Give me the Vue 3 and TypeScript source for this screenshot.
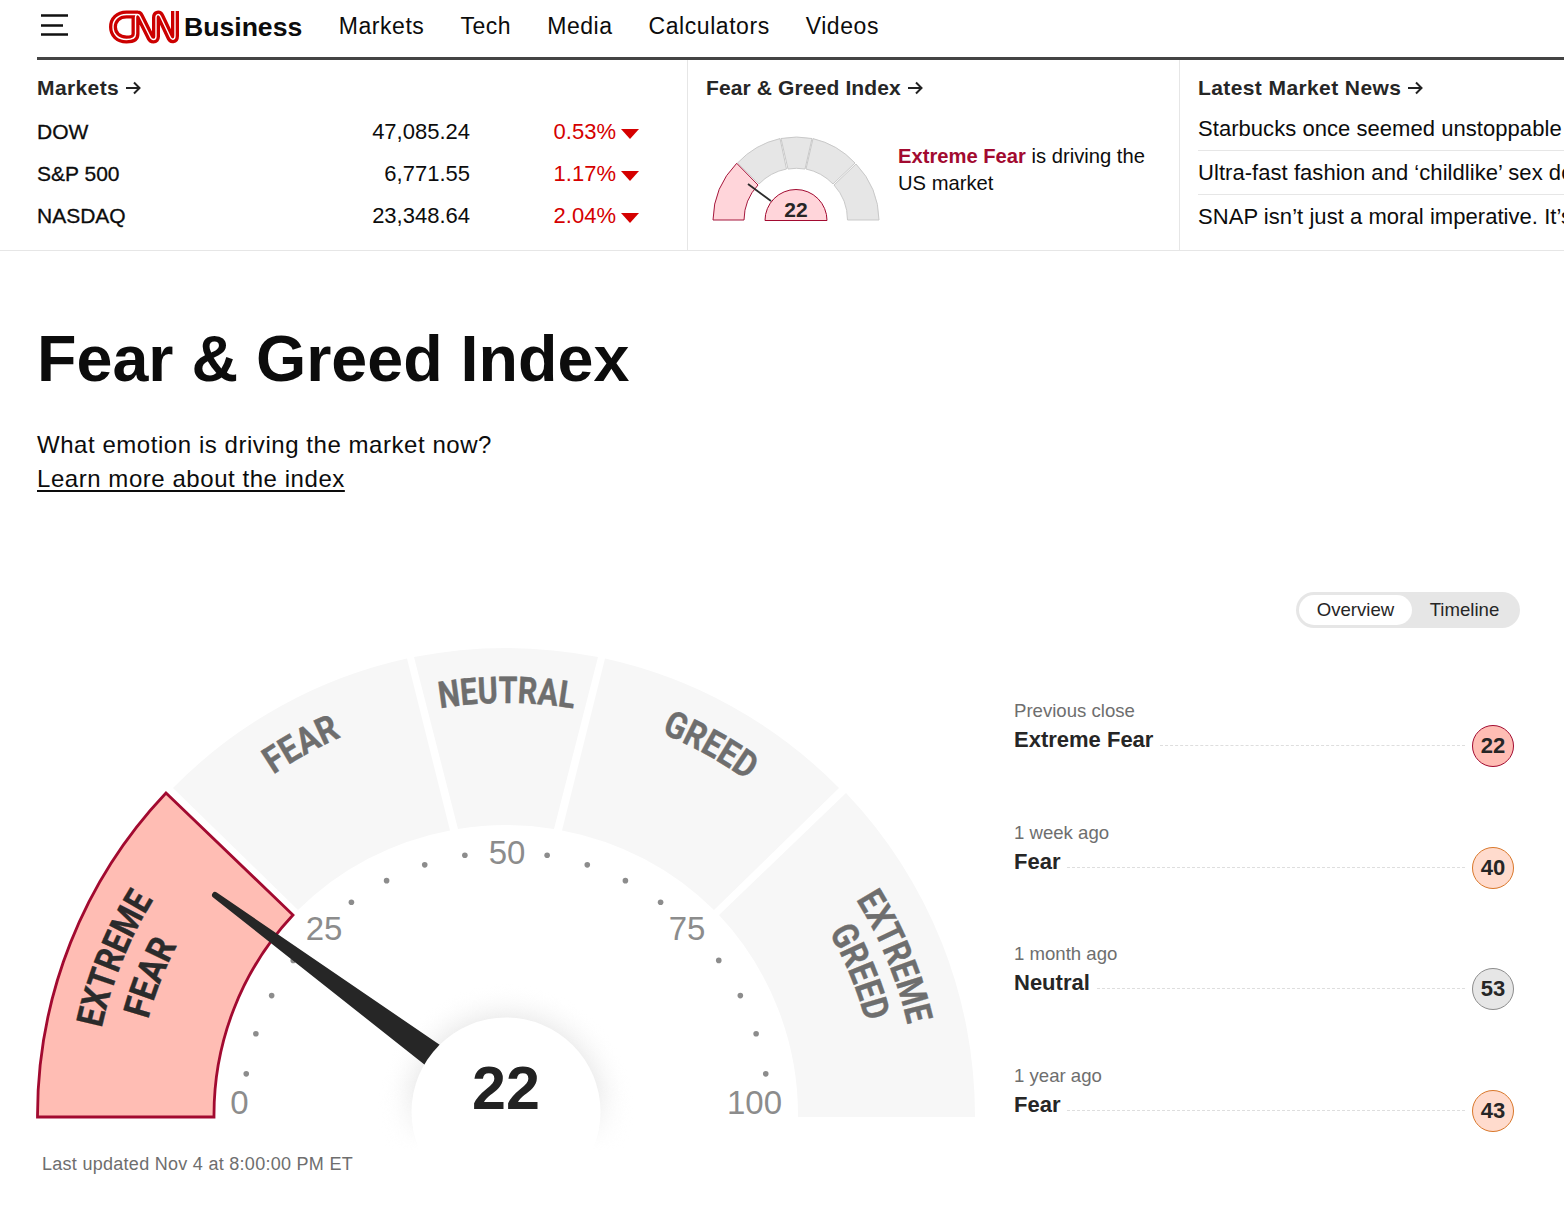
<script setup lang="ts">
const cx = 506
const cy = 1117

function pt(r: number, deg: number): [number, number] {
  const a = (deg * Math.PI) / 180
  return [cx - r * Math.cos(a), cy - r * Math.sin(a)]
}

function arc(r: number, mid: number, half: number): string {
  const [x1, y1] = pt(r, mid - half)
  const [x2, y2] = pt(r, mid + half)
  return `M${x1.toFixed(2)} ${y1.toFixed(2)}A${r} ${r} 0 0 1 ${x2.toFixed(2)} ${y2.toFixed(2)}`
}

const sections = [
  { d: 'M37.500 1117A469 469 0 0 1 166 793L293 915A292 292 0 0 0 214 1117Z', active: true },
  { d: 'M173 788A469 469 0 0 1 407 658.6L450 830.4A292 292 0 0 0 298 910Z', active: false },
  { d: 'M414 657.1A469 469 0 0 1 598 657.1L554 829A292 292 0 0 0 458 829Z', active: false },
  { d: 'M605 658.6A469 469 0 0 1 839 788L714 910A292 292 0 0 0 562 830.4Z', active: false },
  { d: 'M846 793A469 469 0 0 1 975 1117H798A292 292 0 0 0 719 915Z', active: false }
]

const labels = [
  { id: 'l1', text: 'EXTREME', r: 414, mid: 22, len: 139, active: true },
  { id: 'l2', text: 'FEAR', r: 371, mid: 21.4, len: 80, active: true },
  { id: 'l3', text: 'FEAR', r: 414, mid: 61.2, len: 78, active: false },
  { id: 'l4', text: 'NEUTRAL', r: 414, mid: 90.1, len: 134, active: false },
  { id: 'l5', text: 'GREED', r: 414, mid: 118.8, len: 98, active: false },
  { id: 'l6', text: 'EXTREME', r: 412, mid: 157.6, len: 136, active: false },
  { id: 'l7', text: 'GREED', r: 372, mid: 157.7, len: 97, active: false }
].map((l) => ({ ...l, d: arc(l.r, l.mid, 40) }))

const dots = Array.from({ length: 19 }, (_, i) => (i + 1) * 9)
  .filter((deg) => deg !== 45 && deg !== 90 && deg !== 135)
  .map((deg) => {
    const [x, y] = pt(263, deg)
    return { x, y: y - 2 }
  })

const scale = [
  { t: '0', x: 239.5, y: 1114 },
  { t: '25', x: 324, y: 940 },
  { t: '50', x: 507, y: 864 },
  { t: '75', x: 687, y: 940 },
  { t: '100', x: 754.5, y: 1114 }
]

const indices = [
  { name: 'DOW', value: '47,085.24', pct: '0.53%' },
  { name: 'S&P 500', value: '6,771.55', pct: '1.17%' },
  { name: 'NASDAQ', value: '23,348.64', pct: '2.04%' }
]

const news = [
  'Starbucks once seemed unstoppable',
  'Ultra-fast fashion and ‘childlike’ sex dolls spark outrage',
  'SNAP isn’t just a moral imperative. It’s good for the economy'
]

const nav = ['Markets', 'Tech', 'Media', 'Calculators', 'Videos']

const history = [
  { when: 'Previous close', label: 'Extreme Fear', value: 22, tone: 'ef' },
  { when: '1 week ago', label: 'Fear', value: 40, tone: 'f' },
  { when: '1 month ago', label: 'Neutral', value: 53, tone: 'n' },
  { when: '1 year ago', label: 'Fear', value: 43, tone: 'f' }
]

const logoPath =
  'M29 4.500H17.500C9 4.500 4 10 4 17C4 24 9 29.500 17.500 29.500C23 29.500 26.500 28 26.500 24V7.500C26.500 4 29.500 3.500 31 6.500L41 26.500C42.500 30.500 47 30.500 47 26.500V7.500C47 4 50 3.500 51.500 6.500L61 26.500C62.500 30.500 66 30 66 26V1'
</script>

<template>
  <div class="page">
    <header class="topbar">
      <svg class="burger" width="28" height="22" viewBox="0 0 28 22" aria-hidden="true">
        <path d="M1 1.500H28M1 11.500H23M1 20.500H28" stroke="#111" stroke-width="2.600" fill="none" />
      </svg>
      <svg class="logo" width="70" height="34" viewBox="0 0 70 34" aria-label="CNN">
        <g fill="none" stroke-linejoin="round" stroke-linecap="butt">
          <path :d="logoPath" stroke="#cc0000" stroke-width="8" />
          <path :d="logoPath" stroke="#fff" stroke-width="1.400" />
        </g>
      </svg>
      <span class="brand">Business</span>
      <nav class="nav">
        <a v-for="n in nav" :key="n">{{ n }}</a>
      </nav>
    </header>

    <section class="ticker">
      <div class="col col-markets">
        <h3 class="col-title">Markets
          <svg class="arrow" width="15" height="14" viewBox="0 0 15 14"><path d="M0 7H13.500M8 1.500L13.500 7L8 12.500" fill="none" stroke="#222" stroke-width="2" /></svg>
        </h3>
        <div v-for="i in indices" :key="i.name" class="quote">
          <span class="q-name">{{ i.name }}</span>
          <span class="q-value">{{ i.value }}</span>
          <span class="q-pct">{{ i.pct }}</span>
          <svg class="q-tri" width="18" height="10" viewBox="0 0 18 10"><path d="M0 0H18L9 10Z" fill="#d50000" /></svg>
        </div>
      </div>
      <div class="col col-fg">
        <h3 class="col-title tight">Fear &amp; Greed Index
          <svg class="arrow" width="15" height="14" viewBox="0 0 15 14"><path d="M0 7H13.500M8 1.500L13.500 7L8 12.500" fill="none" stroke="#222" stroke-width="2" /></svg>
        </h3>
        <div class="fg-body">
          <svg class="mini" width="168" height="86" viewBox="712 136 168 86">
            <g fill="#e6e6e6" stroke="#c9c9c9" stroke-width="1">
              <path d="M737.500 163A83 83 0 0 1 780 138.600L786.500 169A52 52 0 0 0 759 184Z" />
              <path d="M781 138.500A83 83 0 0 1 812 138.500L805 169A52 52 0 0 0 788 169Z" />
              <path d="M813 138.600A83 83 0 0 1 855 163L833 184A52 52 0 0 0 806 169Z" />
              <path d="M856 164A83 83 0 0 1 879 220H847.500A52 52 0 0 0 834 185Z" />
            </g>
            <path d="M713 220A83 83 0 0 1 736.700 163.300L758 185A52 52 0 0 0 744 220Z" fill="#ffd5da" stroke="#a5173c" stroke-width="1" />
            <path d="M748 184L771 201" stroke="#2b2b2b" stroke-width="1.800" fill="none" />
            <path d="M765 220.500A31 31 0 0 1 827 220.500Z" fill="#ffd5da" stroke="#a20a30" stroke-width="1" />
            <text class="mini-val" x="796" y="217" text-anchor="middle">22</text>
          </svg>
          <p class="fg-text"><b>Extreme Fear</b> is driving the US market</p>
        </div>
      </div>
      <div class="col col-news">
        <h3 class="col-title">Latest Market News
          <svg class="arrow" width="15" height="14" viewBox="0 0 15 14"><path d="M0 7H13.500M8 1.500L13.500 7L8 12.500" fill="none" stroke="#222" stroke-width="2" /></svg>
        </h3>
        <div v-for="n in news" :key="n" class="news-row">{{ n }}</div>
      </div>
    </section>

    <main class="main">
      <h1 class="title">Fear &amp; Greed Index</h1>
      <p class="lede">What emotion is driving the market now?</p>
      <a class="lede learn">Learn more about the index</a>

      <div class="toggle-row">
        <div class="toggle">
          <span class="tab on">Overview</span>
          <span class="tab">Timeline</span>
        </div>
      </div>

      <div class="board">
        <div class="gauge-col">
          <svg class="gauge" width="945" height="506" viewBox="37 640 945 506">
            <defs>
              <radialGradient id="glow" gradientUnits="userSpaceOnUse" cx="506" cy="1112" r="128">
                <stop offset="0.73" stop-color="#efefef" />
                <stop offset="1" stop-color="#ffffff" stop-opacity="0" />
              </radialGradient>
              <linearGradient id="fade" gradientUnits="userSpaceOnUse" x1="0" y1="1085" x2="0" y2="1150">
                <stop offset="0" stop-color="#fff" />
                <stop offset="1" stop-color="#000" />
              </linearGradient>
              <mask id="glowmask" maskUnits="userSpaceOnUse" x="350" y="960" width="320" height="200">
                <rect x="350" y="960" width="320" height="200" fill="url(#fade)" />
              </mask>
              <path v-for="l in labels" :id="l.id" :key="l.id" :d="l.d" />
            </defs>
            <path
              v-for="(s, i) in sections"
              :key="i"
              :d="s.d"
              :class="s.active ? 'sec sec-on' : 'sec'"
            />
            <text v-for="l in labels" :key="l.id" :class="l.active ? 'seg seg-on' : 'seg'" text-anchor="middle">
              <textPath :href="'#' + l.id" startOffset="50%" :textLength="l.len" lengthAdjust="spacingAndGlyphs">{{ l.text }}</textPath>
            </text>
            <circle v-for="(d, i) in dots" :key="i" :cx="d.x" :cy="d.y" r="2.800" fill="#8c8c8c" />
            <text v-for="s in scale" :key="s.t" class="tick" :x="s.x" :y="s.y" text-anchor="middle">{{ s.t }}</text>
            <circle cx="506" cy="1112" r="128" fill="url(#glow)" mask="url(#glowmask)" />
            <path d="M213.200 897.400A3 3 0 0 1 216.800 892.600L440 1045L425 1065Z" fill="#262626" />
            <circle cx="506" cy="1112" r="94.500" fill="#fff" />
            <text class="needle-val" x="506" y="1109" text-anchor="middle">22</text>
          </svg>
          <div class="updated">Last updated Nov 4 at 8:00:00 PM ET</div>
        </div>

        <aside class="history">
          <div v-for="h in history" :key="h.when" class="h-row">
            <div class="h-when">{{ h.when }}</div>
            <div class="h-line">
              <span class="h-label">{{ h.label }}</span>
              <span class="h-dots"></span>
              <span class="h-badge" :class="h.tone">{{ h.value }}</span>
            </div>
          </div>
        </aside>
      </div>
    </main>
  </div>
</template>

<style>
html, body { margin: 0; background: #fff; }
</style>

<style scoped>
.page {
  width: 1564px;
  height: 1213px;
  overflow: hidden;
  font-family: "Liberation Sans", Arial, sans-serif;
  color: #0c0c0c;
  background: #fff;
}
.topbar {
  display: flex;
  align-items: center;
  height: 57px;
  margin-left: 37px;
  border-bottom: 3px solid #444;
}
.burger { margin-left: 3px; margin-top: -8px; flex: none; }
.logo { margin-left: 41px; margin-top: -3px; flex: none; }
.brand { margin-left: 5px; font-size: 26.600px; font-weight: 700; margin-top: -3px; }
.nav { display: flex; gap: 36px; margin-left: 36.500px; font-size: 23px; letter-spacing: 0.55px; margin-top: -5px; }
.ticker {
  display: grid;
  grid-template-columns: 688px 492px 384px;
  height: 190px;
  border-bottom: 1px solid #e6e6e6;
}
.col { overflow: hidden; padding-top: 16px; box-sizing: border-box; height: 190px; }
.col-markets { padding-left: 37px; border-right: 1px solid #e6e6e6; }
.col-fg { padding-left: 18px; border-right: 1px solid #e6e6e6; }
.col-news { padding-left: 18px; }
.col-title {
  margin: 0;
  font-size: 21px;
  line-height: 24px;
  font-weight: 700;
  color: #262626;
  letter-spacing: 0.4px;
  display: flex;
  align-items: center;
  gap: 7px;
}
.col-title.tight { letter-spacing: 0.13px; }
.quote {
  display: flex;
  align-items: center;
  height: 42px;
  font-size: 22px;
}
.col-title + .quote { margin-top: 11px; }
.q-name { width: 270px; font-size: 21px; -webkit-text-stroke: 0.3px #0c0c0c; }
.q-value { width: 163px; text-align: right; }
.q-pct { width: 146px; text-align: right; color: #d50000; }
.q-tri { margin-left: 5px; margin-top: 3px; }
.fg-body { display: flex; align-items: flex-start; margin-top: 36px; }
.mini { margin-left: 6px; flex: none; }
.mini-val { font-size: 21px; font-weight: 700; fill: #262626; font-family: "Liberation Sans", Arial, sans-serif; }
.fg-text { margin: 7px 0 0 18px; font-size: 20.200px; line-height: 27px; width: 260px; }
.fg-text b { color: #a20a30; }
.news-row {
  height: 44px;
  line-height: 44px;
  font-size: 22px;
  letter-spacing: 0.05px;
  white-space: nowrap;
  overflow: hidden;
  box-sizing: border-box;
  border-bottom: 1px solid #e6e6e6;
}
.news-row:last-child { border-bottom: 0; }
.col-title + .news-row { margin-top: 7px; }
.main { padding: 0 44px 0 37px; }
.title {
  margin: 72px 0 0;
  font-size: 64.600px;
  line-height: 72px;
  font-weight: 700;
  color: #0c0c0c;
}
.lede {
  display: block;
  margin: 0;
  font-size: 24px;
  line-height: 34px;
  letter-spacing: 0.55px;
  color: #0c0c0c;
}
.title + .lede { margin-top: 33px; }
.learn { text-decoration: underline; text-underline-offset: 3px; }
.toggle-row { display: flex; justify-content: flex-end; margin-top: 96px; }
.toggle {
  display: flex;
  align-items: center;
  height: 36px;
  width: 224px;
  box-sizing: border-box;
  padding: 3px;
  background: #e6e6e6;
  border-radius: 18px;
  font-size: 18.600px;
  color: #262626;
}
.tab { flex: none; height: 30px; line-height: 30px; text-align: center; }
.tab.on { width: 113px; background: #fff; border-radius: 15px; }
.tab:not(.on) { width: 105px; }
.board { display: flex; margin-top: 12px; }
.gauge-col { width: 945px; flex: none; }
.gauge { display: block; overflow: visible; }
.sec { fill: #f7f7f7; }
.sec-on { fill: #ffbdb4; stroke: #a20a30; stroke-width: 2.800; }
.seg {
  font-family: "Liberation Sans Narrow", Roboto, "Liberation Sans", sans-serif;
  font-weight: 700;
  font-size: 37px;
  fill: #6e6e6e;
  stroke: #6e6e6e;
  stroke-width: 0.4px;
}
.seg-on { fill: #2b2b2b; stroke: #2b2b2b; }
.tick { font-size: 33px; fill: #8c8c8c; font-family: "Liberation Sans", Arial, sans-serif; }
.needle-val { font-size: 61px; font-weight: 700; fill: #222; font-family: "Liberation Sans", Arial, sans-serif; }
.updated { margin: 7px 0 0 5px; font-size: 18px; line-height: 22px; letter-spacing: 0.28px; color: #6e6e6e; }
.history { margin-left: 32px; width: 500px; padding-top: 59px; }
.h-row { height: 121.500px; }
.h-when { font-size: 18.600px; line-height: 24px; color: #6e6e6e; }
.h-line { display: flex; align-items: center; height: 42px; margin-top: 2px; width: 500px; }
.h-label { font-size: 22px; font-weight: 700; color: #262626; margin-top: -12px; white-space: nowrap; }
.h-dots { flex: 1; margin: -1px 7px 0; border-top: 1px dashed #dedede; }
.h-badge {
  flex: none;
  width: 42px;
  height: 42px;
  box-sizing: border-box;
  border-radius: 50%;
  border: 1.500px solid;
  display: flex;
  align-items: center;
  justify-content: center;
  font-size: 22px;
  font-weight: 700;
  color: #262626;
}
.h-badge.ef { background: #ffbdb4; border-color: #a20a30; }
.h-badge.f { background: #ffdbcd; border-color: #d9772a; }
.h-badge.n { background: #e6e6e6; border-color: #8c8c8c; }
</style>
